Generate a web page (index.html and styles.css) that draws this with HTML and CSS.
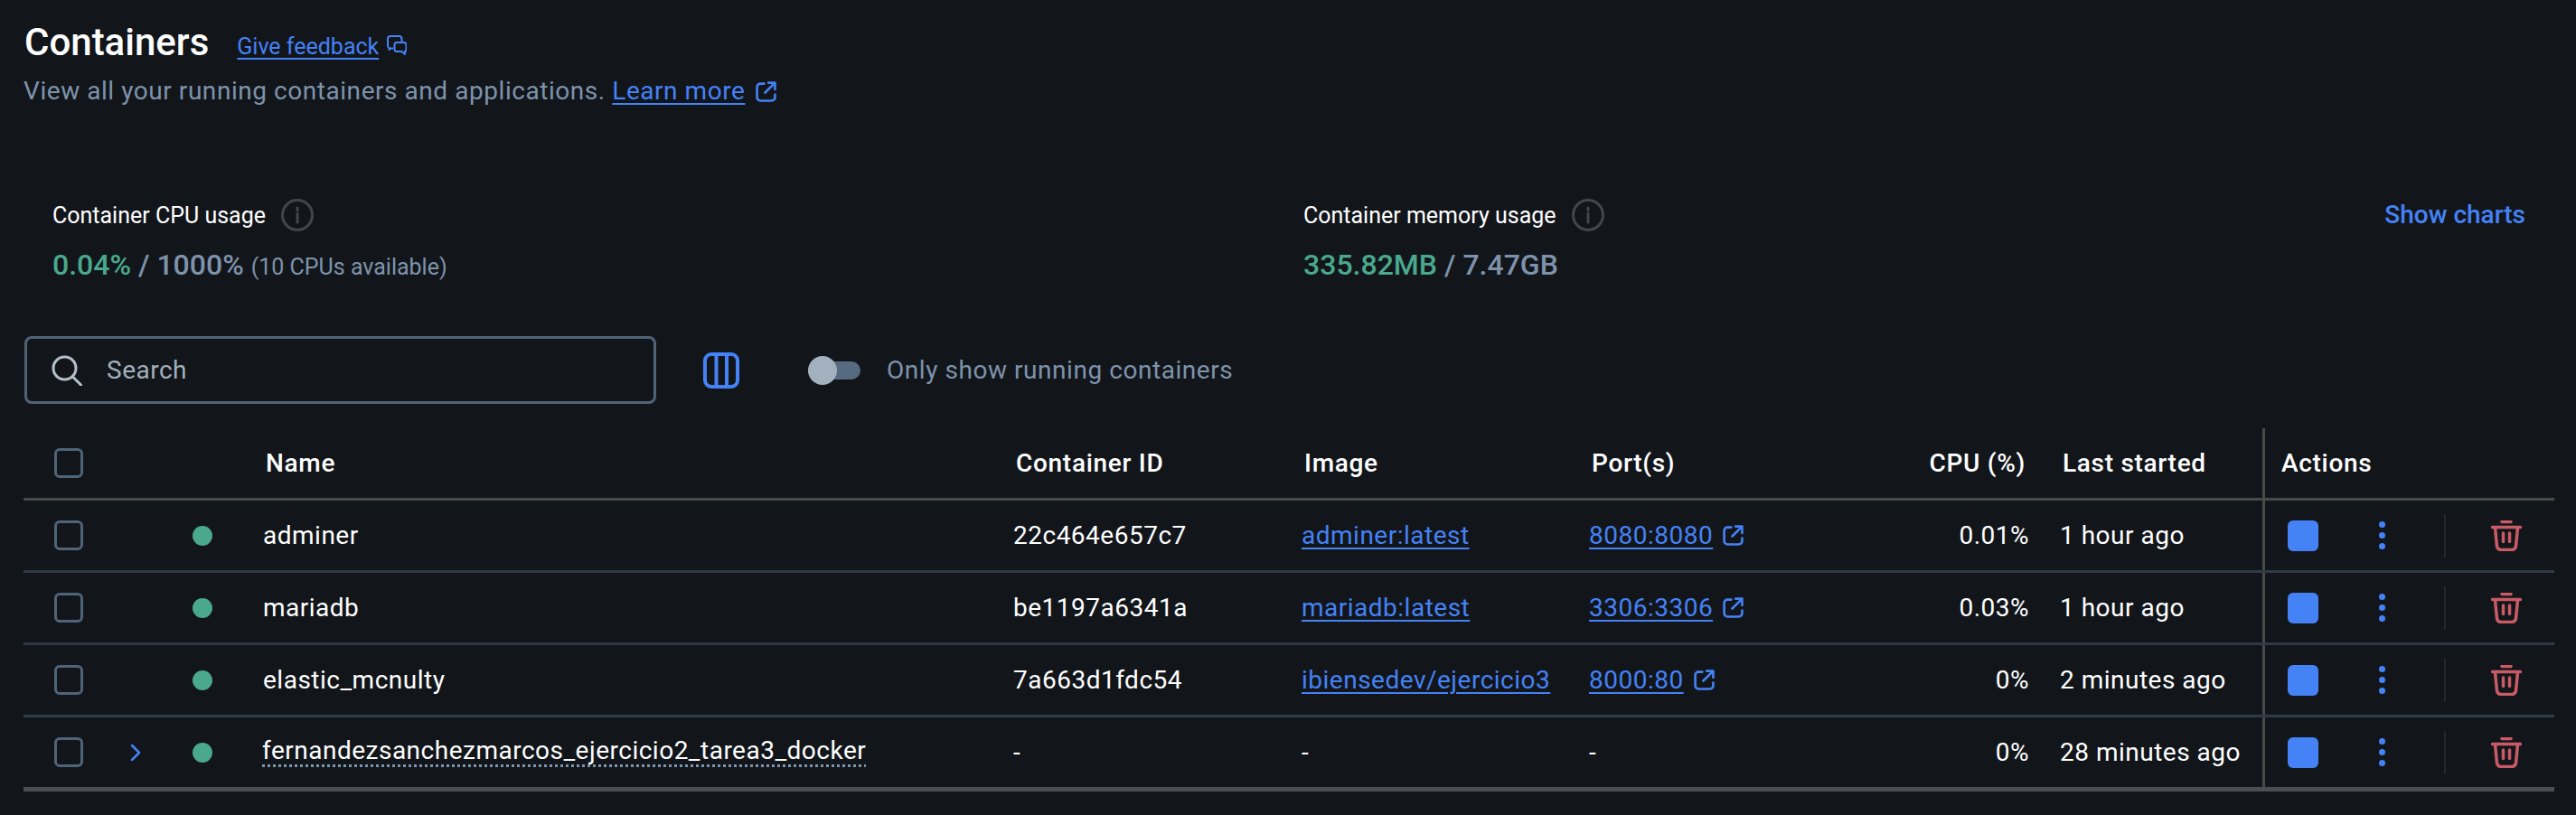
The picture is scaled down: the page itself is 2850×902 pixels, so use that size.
FILE: index.html
```html
<!DOCTYPE html>
<html>
<head>
    <title>Containers</title>
    <link rel="stylesheet" href="styles.css">
</head>
<body>
    <div class="page-head">
        <div class="title-row">
            <h1>Containers</h1>
            <a class="feedback" href="#">Give feedback</a>
            <svg class="feedback-icon" viewBox="0 0 22 22"><path d="M6.500 14.500H4L2.500 16v-2A3 3 0 0 1 1 11.500V4a3 3 0 0 1 3-3h9.500a3 3 0 0 1 3 3v4"/><path d="M11 8h8a2.500 2.500 0 0 1 2.500 2.500v5A2.500 2.500 0 0 1 20 18v3l-3.500-3H11a2.500 2.500 0 0 1-2.500-2.500v-5A2.500 2.500 0 0 1 11 8z"/></svg>
        </div>
        <p class="subtitle">View all your running containers and applications. <a href="#">Learn more</a>
            <svg class="ext-icon" viewBox="0 0 22 22"><path d="M9 2.500H5A3.500 3.500 0 0 0 1.500 6v11A3.500 3.500 0 0 0 5 20.500h12a3.500 3.500 0 0 0 3.500-3.500v-3"/><path d="M13.500 1.500h7v7M20.500 1.500L10 12"/></svg>
        </p>
    </div>

    <div class="stats">
        <div class="stat stat-cpu">
            <div class="stat-label">Container CPU usage
                <svg class="info-icon" viewBox="0 0 36 36"><circle cx="18" cy="18" r="16.500"/><path d="M18 16v10M18 10v2.500"/></svg>
            </div>
            <div class="stat-value"><span class="green">0.04%</span> / 1000% <small>(10 CPUs available)</small></div>
        </div>
        <div class="stat stat-mem">
            <div class="stat-label">Container memory usage
                <svg class="info-icon" viewBox="0 0 36 36"><circle cx="18" cy="18" r="16.500"/><path d="M18 16v10M18 10v2.500"/></svg>
            </div>
            <div class="stat-value"><span class="green">335.82MB</span> / 7.47GB</div>
        </div>
        <a class="show-charts" href="#">Show charts</a>
    </div>

    <div class="toolbar">
        <div class="search">
            <svg class="search-icon" viewBox="0 0 34 34"><circle cx="14.500" cy="14.500" r="12.500"/><path d="M23.500 24l9 9"/></svg>
            <span>Search</span>
        </div>
        <svg class="columns-icon" viewBox="0 0 40 40"><rect x="2" y="2" width="36" height="36" rx="7"/><path d="M14.500 2v36M26 2v36"/></svg>
        <div class="toggle"><span class="thumb"></span></div>
        <span class="toggle-label">Only show running containers</span>
    </div>

    <div class="table">
        <div class="row head">
            <div class="cell"><span class="check"></span></div>
            <div class="cell"></div>
            <div class="cell"></div>
            <div class="cell th">Name</div>
            <div class="cell th">Container ID</div>
            <div class="cell th">Image</div>
            <div class="cell th">Port(s)</div>
            <div class="cell th right">CPU (%)</div>
            <div class="cell th">Last started</div>
            <div class="cell th actions">Actions</div>
        </div>

        <div class="row">
            <div class="cell"><span class="check"></span></div>
            <div class="cell"></div>
            <div class="cell"><span class="dot"></span></div>
            <div class="cell">adminer</div>
            <div class="cell">22c464e657c7</div>
            <div class="cell"><a href="#">adminer:latest</a></div>
            <div class="cell"><a href="#">8080:8080</a>
                <svg class="ext-icon" viewBox="0 0 22 22"><path d="M9 2.500H5A3.500 3.500 0 0 0 1.500 6v11A3.500 3.500 0 0 0 5 20.500h12a3.500 3.500 0 0 0 3.500-3.500v-3"/><path d="M13.500 1.500h7v7M20.500 1.500L10 12"/></svg>
            </div>
            <div class="cell right">0.01%</div>
            <div class="cell">1 hour ago</div>
            <div class="cell actions">
                <span class="stop"></span>
                <span class="more"><i></i><i></i><i></i></span>
                <span class="sep"></span>
                <svg class="trash" viewBox="0 0 34 34"><path d="M12 1.500h10M1.500 7.500h31M4.500 8l2 20.500a4.500 4.500 0 0 0 4.500 4h12a4.500 4.500 0 0 0 4.500-4l2-20.500M13.500 14v9.500M20.500 14v9.500"/></svg>
            </div>
        </div>

        <div class="row">
            <div class="cell"><span class="check"></span></div>
            <div class="cell"></div>
            <div class="cell"><span class="dot"></span></div>
            <div class="cell">mariadb</div>
            <div class="cell">be1197a6341a</div>
            <div class="cell"><a href="#">mariadb:latest</a></div>
            <div class="cell"><a href="#">3306:3306</a>
                <svg class="ext-icon" viewBox="0 0 22 22"><path d="M9 2.500H5A3.500 3.500 0 0 0 1.500 6v11A3.500 3.500 0 0 0 5 20.500h12a3.500 3.500 0 0 0 3.500-3.500v-3"/><path d="M13.500 1.500h7v7M20.500 1.500L10 12"/></svg>
            </div>
            <div class="cell right">0.03%</div>
            <div class="cell">1 hour ago</div>
            <div class="cell actions">
                <span class="stop"></span>
                <span class="more"><i></i><i></i><i></i></span>
                <span class="sep"></span>
                <svg class="trash" viewBox="0 0 34 34"><path d="M12 1.500h10M1.500 7.500h31M4.500 8l2 20.500a4.500 4.500 0 0 0 4.500 4h12a4.500 4.500 0 0 0 4.500-4l2-20.500M13.500 14v9.500M20.500 14v9.500"/></svg>
            </div>
        </div>

        <div class="row">
            <div class="cell"><span class="check"></span></div>
            <div class="cell"></div>
            <div class="cell"><span class="dot"></span></div>
            <div class="cell">elastic_mcnulty</div>
            <div class="cell">7a663d1fdc54</div>
            <div class="cell"><a href="#">ibiensedev/ejercicio3</a></div>
            <div class="cell"><a href="#">8000:80</a>
                <svg class="ext-icon" viewBox="0 0 22 22"><path d="M9 2.500H5A3.500 3.500 0 0 0 1.500 6v11A3.500 3.500 0 0 0 5 20.500h12a3.500 3.500 0 0 0 3.500-3.500v-3"/><path d="M13.500 1.500h7v7M20.500 1.500L10 12"/></svg>
            </div>
            <div class="cell right">0%</div>
            <div class="cell">2 minutes ago</div>
            <div class="cell actions">
                <span class="stop"></span>
                <span class="more"><i></i><i></i><i></i></span>
                <span class="sep"></span>
                <svg class="trash" viewBox="0 0 34 34"><path d="M12 1.500h10M1.500 7.500h31M4.500 8l2 20.500a4.500 4.500 0 0 0 4.500 4h12a4.500 4.500 0 0 0 4.500-4l2-20.500M13.500 14v9.500M20.500 14v9.500"/></svg>
            </div>
        </div>

        <div class="row last">
            <div class="cell"><span class="check"></span></div>
            <div class="cell"><svg class="chevron" viewBox="0 0 12 20"><path d="M2 2l8 8-8 8"/></svg></div>
            <div class="cell"><span class="dot"></span></div>
            <div class="cell"><span class="compose">fernandezsanchezmarcos_ejercicio2_tarea3_docker</span></div>
            <div class="cell">-</div>
            <div class="cell">-</div>
            <div class="cell">-</div>
            <div class="cell right">0%</div>
            <div class="cell">28 minutes ago</div>
            <div class="cell actions">
                <span class="stop"></span>
                <span class="more"><i></i><i></i><i></i></span>
                <span class="sep"></span>
                <svg class="trash" viewBox="0 0 34 34"><path d="M12 1.500h10M1.500 7.500h31M4.500 8l2 20.500a4.500 4.500 0 0 0 4.500 4h12a4.500 4.500 0 0 0 4.500-4l2-20.500M13.500 14v9.500M20.500 14v9.500"/></svg>
            </div>
        </div>
    </div>
</body>
</html>
```

FILE: styles.css
```css
body { margin: 0; padding: 0 24px 0 26px; background: #12161b; color: #fff; font-family: Roboto, sans-serif; font-size: 28px; overflow: hidden; }
a { color: #4582f5; text-decoration: underline; text-decoration-thickness: 2px; text-underline-offset: 4px; }
svg { fill: none; stroke-linecap: round; stroke-linejoin: round; flex: none; }

.page-head { height: 150px; padding-top: 22px; box-sizing: border-box; }
.title-row { display: flex; align-items: center; height: 48px; padding-left: 1px; }
h1 { margin: 0; font-size: 42px; font-weight: 500; }
.feedback { margin-left: 31px; margin-top: 10px; font-size: 25px; }
.feedback-icon { width: 22px; height: 22px; margin-left: 9px; margin-top: 8px; stroke: #4582f5; stroke-width: 2; }
.subtitle { margin: 11px 0 0; line-height: 40px; color: #7e93ab; letter-spacing: 0.55px; }
.ext-icon { width: 23px; height: 23px; margin-left: 4px; stroke: #4582f5; stroke-width: 2.500; vertical-align: -3px; }

.stats { display: flex; height: 172px; padding-left: 32px; padding-right: 32px; padding-top: 70px; box-sizing: border-box; }
.stat-cpu { width: 1384px; }
.stat-mem { flex: 1; }
.stat-label { display: flex; align-items: center; gap: 17px; height: 36px; font-size: 25px; }
.info-icon { width: 36px; height: 36px; stroke: #43474c; stroke-width: 3; }
.stat-value { margin-top: 18px; font-size: 32px; font-weight: 500; color: #7e93ab; }
.stat-value small { font-size: 25px; font-weight: 400; }
.green { color: #4aa88c; }
.show-charts { font-size: 28px; font-weight: 500; text-decoration: none; height: 36px; line-height: 36px; }

.toolbar { display: flex; align-items: center; height: 75px; padding-top: 50px; padding-left: 1px; }
.search { display: flex; align-items: center; width: 699px; height: 75px; box-sizing: border-box; border: 3px solid #4f6478; border-radius: 8px; padding-left: 27px; color: #a3b0bb; font-size: 28px; letter-spacing: 0.5px; }
.search-icon { width: 34px; height: 34px; margin-right: 27px; stroke: #b4c0ca; stroke-width: 3; }
.columns-icon { width: 40px; height: 40px; margin-left: 52px; stroke: #4582f5; stroke-width: 4; }
.toggle { position: relative; width: 58px; height: 20px; margin-left: 76px; border-radius: 10px; background: #566a80; }
.thumb { position: absolute; left: 0; top: -6px; width: 32px; height: 32px; border-radius: 50%; background: #a3b1bf; }
.toggle-label { margin-left: 29px; font-size: 28px; letter-spacing: 0.55px; color: #7e93ab; }

.table { margin-top: 27px; }
.row { display: grid; grid-template-columns: 104px 83px 78px 830px 319px 318px 242px 245px 34px 224px 323px; height: 80px; box-sizing: border-box; border-bottom: 3px solid #2e3a46; }
.row.last { height: 82px; border-bottom: 5px solid #4a4f55; }
.row.head { border-bottom-color: #4a4a4a; }
.cell { display: flex; align-items: center; white-space: pre; font-size: 28px; letter-spacing: 0.5px; }
.cell:nth-child(8) { grid-column: 8; }
.cell:nth-child(9) { grid-column: 10; }
.cell:nth-child(10) { grid-column: 11; }
.th { font-weight: 500; padding-left: 3px; letter-spacing: 0.7px; }
.right { justify-content: flex-end; }
.th.right { padding-right: 4px; }
.actions { align-self: stretch; border-left: 3px solid #4a4a4a; padding-left: 25px; }
.th.actions { padding-left: 18px; }
.cell a + .ext-icon { margin-left: 11px; }

.check { width: 32px; height: 33px; margin-left: 34px; box-sizing: border-box; border: 3px solid #4f6478; border-radius: 6px; }
.dot { width: 22px; height: 22px; border-radius: 50%; background: #4aa88c; }
.chevron { width: 12px; height: 20px; margin-left: 14px; stroke: #4582f5; stroke-width: 2.500; }
.compose { margin-left: -1px; padding-bottom: 3px; line-height: 30px; background: linear-gradient(90deg, #7d96b0 3px, transparent 3px) left bottom / 6px 3px repeat-x; }
.stop { width: 34px; height: 34px; border-radius: 6px; background: #4582f5; }
.more { display: flex; flex-direction: column; gap: 5px; margin-left: 67px; }
.more i { width: 7px; height: 7px; border-radius: 50%; background: #4582f5; }
.sep { width: 2px; height: 48px; margin-left: 65px; background: #23282e; }
.trash { width: 34px; height: 34px; margin-left: 50px; stroke: #c95b66; stroke-width: 3.500; }
```
